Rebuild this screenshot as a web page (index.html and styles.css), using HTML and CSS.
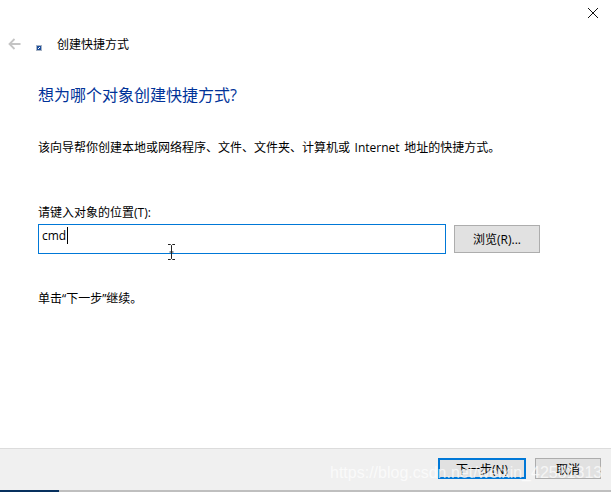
FILE: index.html
```html
<!DOCTYPE html>
<html>

<head>
  <title>创建快捷方式</title>
  <meta charset="utf-8">
  <link rel="stylesheet" href="styles.css">
</head>

<body>
  <div class="wizard">
    <div class="close-row">
      <svg class="close-icon" width="10" height="10" viewBox="0 0 10 10">
        <path d="M0 0L10 10M10 0L0 10" stroke="#111" stroke-width="1" fill="none" />
      </svg>
    </div>

    <div class="title-row">
      <svg class="back-icon" width="13" height="12" viewBox="0 0 13 12">
        <path d="M12.5 6H1.5M6.5 1L1.5 6L6.5 11" stroke="#c4c4c4" stroke-width="1.8" fill="none" />
      </svg>
      <svg class="shortcut-icon" width="6" height="6" viewBox="0 0 6 6">
        <rect width="6" height="6" fill="#a9b4c4" />
        <rect x="1" y="1" width="4" height="4" fill="#1c4f9c" />
        <path d="M2 4L4 2" stroke="#fff" stroke-width="1" />
      </svg>
      <span class="title-text">创建快捷方式</span>
    </div>

    <div class="content">
      <h1 class="heading">想为哪个对象创建快捷方式?</h1>
      <p class="intro">该向导帮你创建本地或网络程序、文件、文件夹、计算机或 Internet 地址的快捷方式。</p>

      <label class="field-label" for="target">请键入对象的位置(T):</label>
      <div class="field-row">
        <div class="field-input" id="target"><span class="field-value">cmd</span><span class="caret"></span></div>
        <button class="btn browse-btn">浏览(R)...</button>
      </div>

      <p class="hint">单击“下一步”继续。</p>
    </div>

    <div class="footer">
      <button class="btn next-btn">下一步(N)</button>
      <button class="btn cancel-btn">取消</button>
    </div>
    <div class="progress">
      <div class="progress-done"></div>
    </div>

    <svg class="ibeam" width="7" height="16" viewBox="0 0 7 16">
      <path d="M0 .5H2.5L3.5 1.5L4.5 .5H7M3.5 1.5V14.5M0 15.5H2.5L3.5 14.5L4.5 15.5H7M1.5 8H5.5" stroke="#222" stroke-width="1" fill="none" />
    </svg>
    <div class="watermark">https://blog.csdn.net/weixin_42581313</div>
  </div>
</body>

</html>
```

FILE: styles.css
```css
* {
  box-sizing: border-box;
}

html,
body {
  margin: 0;
  height: 100%;
}

body {
  font-family: "Open Sans", "Noto Sans CJK SC", sans-serif;
  font-size: 12px;
  color: #000;
  background-color: #fff;
}

.wizard {
  position: relative;
  display: flex;
  flex-direction: column;
  height: 492px;
  overflow: hidden;
}

.close-row {
  display: flex;
  justify-content: flex-end;
  height: 37px;
  padding: 8px 13px 0 0;
}

.close-icon {
  display: block;
}

.title-row {
  display: flex;
  align-items: center;
  height: 16px;
  padding-left: 8px;
}

.back-icon {
  margin-bottom: 2px;
}

.shortcut-icon {
  margin: 5px 0 0 15px;
}

.title-text {
  margin-left: 15px;
  line-height: 16px;
}

.content {
  flex: 1;
  padding: 0 0 0 38px;
}

.heading {
  margin: 31px 0 0 0;
  font-size: 16px;
  font-weight: normal;
  line-height: 22px;
  color: #003399;
}

.intro {
  margin: 33px 0 0 0;
  line-height: 18px;
  word-spacing: 1.5px;
}

.field-label {
  display: block;
  margin-top: 47px;
  line-height: 18px;
}

.field-row {
  display: flex;
  align-items: center;
  gap: 8px;
  margin-top: 2px;
}

.field-input {
  display: flex;
  align-items: flex-start;
  width: 408px;
  height: 30px;
  padding: 2px 3px 0 3px;
  border: 1px solid #0078d7;
  background-color: #fff;
  line-height: 17px;
}

.caret {
  width: 1px;
  height: 17px;
  margin-left: 1px;
  background-color: #000;
}

.btn {
  padding: 0;
  font-family: inherit;
  font-size: 12px;
  color: #000;
  background-color: #e1e1e1;
  border: 1px solid #adadad;
}

.browse-btn {
  width: 86px;
  height: 28px;
}

.hint {
  margin: 36px 0 0 0;
  line-height: 18px;
}

.footer {
  display: flex;
  justify-content: flex-end;
  align-items: flex-start;
  gap: 9px;
  height: 42px;
  padding: 9px 10px 0 0;
  border-top: 1px solid #dcdcdc;
  background-color: #f0f0f0;
}

.next-btn {
  width: 88px;
  height: 21px;
  border: 2px solid #0078d7;
}

.cancel-btn {
  width: 66px;
  height: 21px;
}

.progress {
  height: 2px;
  background-color: #bfbfbf;
}

.progress-done {
  width: 59px;
  height: 2px;
  background-color: #06305e;
}

.ibeam {
  position: absolute;
  left: 168px;
  top: 244px;
}

.watermark {
  position: absolute;
  left: 330px;
  top: 463px;
  font-family: "Liberation Sans", sans-serif;
  font-size: 16px;
  line-height: 20px;
  color: rgba(255, 255, 255, 0.7);
  white-space: nowrap;
}
```
